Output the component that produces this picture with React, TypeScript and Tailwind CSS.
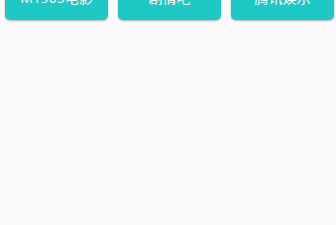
export default function App() {
  const items = ["M1905电影", "剧情吧", "腾讯娱乐"];
  return (
    <div
      className="w-[336px] h-[225px] overflow-hidden bg-[#fafafa]"
      style={{ fontFamily: '"Noto Sans", "Noto Sans CJK SC", sans-serif' }}
    >
      <div className="flex gap-[10px] pl-[5px] -mt-[20px]">
        {items.map((t) => (
          <div
            key={t}
            className="w-[103px] h-[40px] pb-[4px] flex items-center justify-center rounded-[5px] bg-[#1ec8c4] text-white text-[14px] leading-none shadow-[0_1px_2px_rgba(0,0,0,0.3)]"
          >
            {t}
          </div>
        ))}
      </div>
    </div>
  );
}
